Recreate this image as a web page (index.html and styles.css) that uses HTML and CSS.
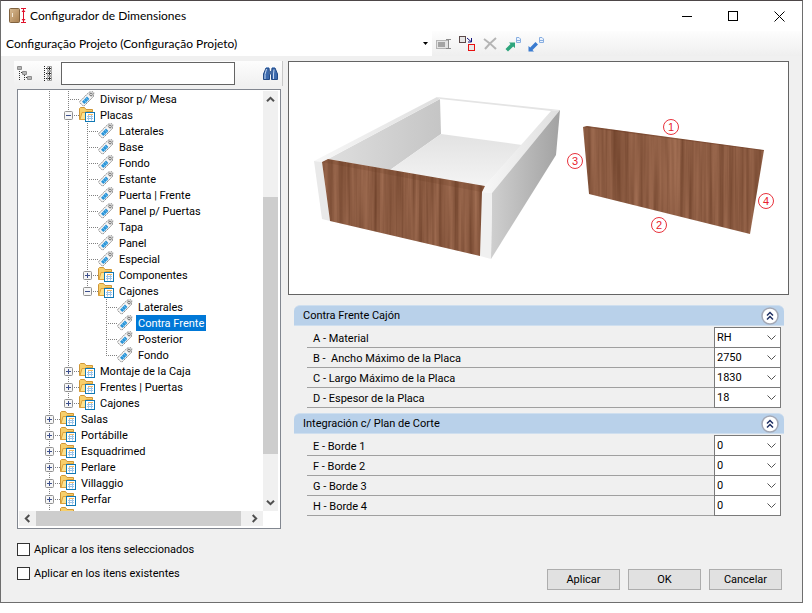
FILE: index.html
```
<!DOCTYPE html>
<html lang="es">
  <head>
    <meta charset="UTF-8" />
    <title>Configurador de Dimensiones</title>
    <link rel="stylesheet" href="styles.css">
  </head>
  <body>
    <!-- shared icons -->
    <svg class="sprite" aria-hidden="true">
      <symbol id="tag" viewBox="0 0 16 16">
        <path d="M.8 10.5 8.5 2.8 10 1.2 14 .8 14.8 1.6 14.4 5.6 12.8 7.2 5.2 14.8 4 14.8 .8 11.6z" fill="#f6f6f6" stroke="#8c8c8c" stroke-dasharray="2 .6" />
        <path d="M9.3 3.2 10.5 1.8 14 1.5 13.8 5.2 12.3 6.6z" fill="#cfcfcf" />
        <path d="M3 10.8 8 5.5 10.4 7.9 5.4 13z" fill="#2b93d6" />
        <path d="M5 9 7.500 11.500M7 7 9 9.500" stroke="#63bdf0" />
        <circle cx="12" cy="3.500" r="1.200" fill="#fff" stroke="#777" />
      </symbol>
      <symbol id="folder" viewBox="0 0 16 16">
        <path d="M.5 12.5V1.5L1.5 .5H5.5L7 2.5H13.5V12.5z" fill="#f7cf6b" stroke="#cf9636" />
        <path d="M1 12.5 3 5.5H6L7.5 4.5H13.5V12.5z" fill="#fde28f" stroke="#dda23c" />
        <rect x="6.5" y="5.5" width="9" height="9" fill="#fff" stroke="#1078b4" />
        <path d="M8 9.5H14M8 11.5H14M9.5 7V13.5M12.5 7V13.5" stroke="#9cc4e8" />
        <path d="M9 7.5H14" stroke="#f4b860" />
      </symbol>
      <symbol id="plus" viewBox="0 0 9 9">
        <rect x=".5" y=".5" width="8" height="8" rx="1" fill="#f6f6f6" stroke="#919191" />
        <path d="M2 4.5H7M4.5 2V7" stroke="#3c4f8c" />
      </symbol>
      <symbol id="minus" viewBox="0 0 9 9">
        <rect x=".5" y=".5" width="8" height="8" rx="1" fill="#f6f6f6" stroke="#919191" />
        <path d="M2 4.5H7" stroke="#3c4f8c" />
      </symbol>
      <symbol id="arrow" viewBox="0 0 9 9">
        <path d="M1 6.3 4.5 2.8 8 6.3" fill="none" stroke="#505050" stroke-width="2" />
      </symbol>
      <symbol id="collapse" viewBox="0 0 18 18">
        <circle cx="9" cy="9" r="8" fill="#fff" stroke="#a3a8b5" stroke-width="1.5" />
        <path d="M6 8.5 9 5.5 12 8.5M6 12.5 9 9.5 12 12.5" fill="none" stroke="#1f2f63" stroke-width="1.5" />
      </symbol>
    </svg>

    <div class="window">
      <header class="titlebar">
        <svg class="app-icon" viewBox="0 0 17 16" aria-hidden="true">
          <defs>
            <linearGradient id="door" x1="0" x2="1" y2="1">
              <stop offset="0" stop-color="#d9bc94" />
              <stop offset="1" stop-color="#a97f4f" />
            </linearGradient>
          </defs>
          <rect x=".5" y=".5" width="10" height="14" rx="1" fill="url(#door)" stroke="#80623f" />
          <path d="M3.5 5V9" stroke="#f5ead8" />
          <path d="M12 .5H17M12 14.5H17M14.5 1V14" stroke="#e0102a" />
          <path d="M12.5 4 14.5 1.5 16.5 4zM12.5 11 14.5 13.5 16.5 11z" fill="#e0102a" />
        </svg>
        <h1>Configurador de Dimensiones</h1>
        <button class="win-btn" aria-label="Minimizar">
          <svg viewBox="0 0 11 11"><path d="M0 5.5H10" stroke="#000" /></svg>
        </button>
        <button class="win-btn" aria-label="Maximizar">
          <svg viewBox="0 0 11 11"><rect x=".5" y=".5" width="9" height="9" fill="none" stroke="#000" /></svg>
        </button>
        <button class="win-btn" aria-label="Cerrar">
          <svg viewBox="0 0 11 11"><path d="M.5 .5 10.5 10.5M10.5 .5 .5 10.5" stroke="#000" /></svg>
        </button>
      </header>

      <div class="toolbar">
        <select class="project" aria-label="Configuración">
          <option>Configuração Projeto (Configuração Projeto)</option>
        </select>
        <button class="tool" aria-label="Renombrar">
          <svg viewBox="0 0 18 18">
            <rect x="1.5" y="5.5" width="12" height="8" fill="#e4e4e4" stroke="#b4b4b4" />
            <rect x="3" y="7" width="7" height="5" fill="#a4a4a4" />
            <path d="M11 4.5H16M11 13.5H16M13.5 5V13" stroke="#8c8c8c" />
          </svg>
        </button>
        <button class="tool" aria-label="Duplicar">
          <svg viewBox="0 0 18 18">
            <rect x="1.5" y="1.5" width="6" height="6" fill="#e6e6e6" stroke="#5c4a4a" />
            <rect x="10.5" y="9.5" width="6" height="6" fill="#e9e9e9" stroke="#e81010" />
            <path d="M9 3 13 6.5M13.5 3V7H10" fill="none" stroke="#14147c" />
          </svg>
        </button>
        <button class="tool" aria-label="Eliminar">
          <svg viewBox="0 0 18 18"><path d="M3 4Q10 9 15 14M15 3Q9 8 4 14" fill="none" stroke="#b4b4b4" stroke-width="2" /></svg>
        </button>
        <button class="tool" aria-label="Exportar">
          <svg viewBox="0 0 18 18">
            <path d="M1.5 14 6.5 9 5 7.5H11V13L9.2 11.5 4 16.5z" fill="#2ea57c" />
            <path d="M12.5 2.5H15L16.5 4V7.5H12.5z" fill="#eaf3ff" stroke="#88aee0" />
            <path d="M13 5.5H16" stroke="#88aee0" />
          </svg>
        </button>
        <button class="tool" aria-label="Importar">
          <svg viewBox="0 0 18 18">
            <path d="M1.5 16.5V11L3.2 12.5 8.5 7 11 9.5 5.5 15 7 16.5z" fill="#3a7bd0" />
            <path d="M12.5 2.5H15L16.5 4V7.5H12.5z" fill="#eaf3ff" stroke="#88aee0" />
            <path d="M13 5.5H16" stroke="#88aee0" />
          </svg>
        </button>
      </div>

      <main class="content">
        <section class="sidebar">
          <div class="search-bar">
            <button class="tool" aria-label="Expandir">
              <svg viewBox="0 0 18 18">
                <path d="M3.5 6V16M8.5 10V16M5 7.5H6M10 12.5H11" stroke="#333" stroke-dasharray="1 1" />
                <path d="M1.5 1.5H5.500V4.500H1.500zM6.500 6.500H10.500V9.500H6.500zM11.500 11.500H15.500V14.500H11.500z" fill="#f4f4f4" stroke="#8d8d8d" />
                <path d="M2 3H5M7 8H10M12 13H15" stroke="#777" />
              </svg>
            </button>
            <button class="tool" aria-label="Contraer">
              <svg viewBox="0 0 18 18">
                <path d="M5.5 1V17M7 3.5H9M7 8.5H9M7 13.5H9" stroke="#222" stroke-dasharray="1 1" />
                <path d="M8.5 1.5H12.5V5.5H8.5zM8.5 6.5H12.5V10.5H8.5zM8.5 11.5H12.5V15.5H8.5z" fill="#f4f4f4" stroke="#a0a0a0" />
                <path d="M9 3.5H12M9 8.5H12M9 13.5H12M10.5 2V5M10.5 7V10M10.5 12V15" stroke="#333" />
              </svg>
            </button>
            <input class="search" type="text" aria-label="Buscar">
            <button class="tool find" aria-label="Buscar en el árbol">
              <svg viewBox="0 0 18 18">
                <path d="M5 3H8L8.5 8V14.5H2.500V9zM11 3H14L16.500 9V14.500H10.500V8z" fill="#3d6aad" stroke="#234a86" />
                <path d="M7.500 6H11.500V9.500H7.500z" fill="#44699f" />
                <path d="M5.500 4 4 9.500V14M13 4.500 12.500 9V14" fill="none" stroke="#c4d8f2" />
                <path d="M5 2.500H8M11 2.500H14" stroke="#7d9fcf" />
              </svg>
            </button>
          </div>

          <div class="tree-box">
            <nav class="tree-view" aria-label="Categorías">
              <ul class="tree">
                <li>
                  <ul>
                    <li><div class="row"><span class="twig"></span><svg class="ico"><use href="#tag" /></svg><span class="label">Divisor p/ Mesa</span></div></li>
                    <li>
                      <div class="row"><span class="twig"><svg><use href="#minus" /></svg></span><svg class="ico"><use href="#folder" /></svg><span class="label">Placas</span></div>
                      <ul>
                        <li><div class="row"><span class="twig"></span><svg class="ico"><use href="#tag" /></svg><span class="label">Laterales</span></div></li>
                        <li><div class="row"><span class="twig"></span><svg class="ico"><use href="#tag" /></svg><span class="label">Base</span></div></li>
                        <li><div class="row"><span class="twig"></span><svg class="ico"><use href="#tag" /></svg><span class="label">Fondo</span></div></li>
                        <li><div class="row"><span class="twig"></span><svg class="ico"><use href="#tag" /></svg><span class="label">Estante</span></div></li>
                        <li><div class="row"><span class="twig"></span><svg class="ico"><use href="#tag" /></svg><span class="label">Puerta | Frente</span></div></li>
                        <li><div class="row"><span class="twig"></span><svg class="ico"><use href="#tag" /></svg><span class="label">Panel p/ Puertas</span></div></li>
                        <li><div class="row"><span class="twig"></span><svg class="ico"><use href="#tag" /></svg><span class="label">Tapa</span></div></li>
                        <li><div class="row"><span class="twig"></span><svg class="ico"><use href="#tag" /></svg><span class="label">Panel</span></div></li>
                        <li><div class="row"><span class="twig"></span><svg class="ico"><use href="#tag" /></svg><span class="label">Especial</span></div></li>
                        <li><div class="row"><span class="twig"><svg><use href="#plus" /></svg></span><svg class="ico"><use href="#folder" /></svg><span class="label">Componentes</span></div></li>
                        <li>
                          <div class="row"><span class="twig"><svg><use href="#minus" /></svg></span><svg class="ico"><use href="#folder" /></svg><span class="label">Cajones</span></div>
                          <ul>
                            <li><div class="row"><span class="twig"></span><svg class="ico"><use href="#tag" /></svg><span class="label">Laterales</span></div></li>
                            <li><div class="row"><span class="twig"></span><svg class="ico"><use href="#tag" /></svg><span class="label selected">Contra Frente</span></div></li>
                            <li><div class="row"><span class="twig"></span><svg class="ico"><use href="#tag" /></svg><span class="label">Posterior</span></div></li>
                            <li><div class="row"><span class="twig"></span><svg class="ico"><use href="#tag" /></svg><span class="label">Fondo</span></div></li>
                          </ul>
                        </li>
                      </ul>
                    </li>
                    <li><div class="row"><span class="twig"><svg><use href="#plus" /></svg></span><svg class="ico"><use href="#folder" /></svg><span class="label">Montaje de la Caja</span></div></li>
                    <li><div class="row"><span class="twig"><svg><use href="#plus" /></svg></span><svg class="ico"><use href="#folder" /></svg><span class="label">Frentes | Puertas</span></div></li>
                    <li><div class="row"><span class="twig"><svg><use href="#plus" /></svg></span><svg class="ico"><use href="#folder" /></svg><span class="label">Cajones</span></div></li>
                  </ul>
                </li>
                <li><div class="row"><span class="twig"><svg><use href="#plus" /></svg></span><svg class="ico"><use href="#folder" /></svg><span class="label">Salas</span></div></li>
                <li><div class="row"><span class="twig"><svg><use href="#plus" /></svg></span><svg class="ico"><use href="#folder" /></svg><span class="label">Portábille</span></div></li>
                <li><div class="row"><span class="twig"><svg><use href="#plus" /></svg></span><svg class="ico"><use href="#folder" /></svg><span class="label">Esquadrimed</span></div></li>
                <li><div class="row"><span class="twig"><svg><use href="#plus" /></svg></span><svg class="ico"><use href="#folder" /></svg><span class="label">Perlare</span></div></li>
                <li><div class="row"><span class="twig"><svg><use href="#plus" /></svg></span><svg class="ico"><use href="#folder" /></svg><span class="label">Villaggio</span></div></li>
                <li><div class="row"><span class="twig"><svg><use href="#plus" /></svg></span><svg class="ico"><use href="#folder" /></svg><span class="label">Perfar</span></div></li>
                <li><div class="row"><span class="twig"></span><svg class="ico"><use href="#folder" /></svg></div></li>
              </ul>
            </nav>
            <div class="scroll vertical">
              <svg class="up"><use href="#arrow" /></svg>
              <span class="track"><span class="thumb"></span></span>
              <svg class="down"><use href="#arrow" /></svg>
            </div>
            <div class="scroll horizontal">
              <svg class="left"><use href="#arrow" /></svg>
              <span class="track"><span class="thumb"></span></span>
              <svg class="right"><use href="#arrow" /></svg>
            </div>
          </div>
        </section>

        <section class="details">
          <div class="preview">
            <svg viewBox="0 0 499 232" role="img" aria-label="Cajón y contra frente">
              <defs>
                <filter id="wood" x="0" y="0" width="1" height="1" color-interpolation-filters="sRGB">
                  <feTurbulence type="fractalNoise" baseFrequency="0.2 0.006" numOctaves="3" seed="4" />
                  <feColorMatrix values="0.25 0 0 0 0.42  0.22 0 0 0 0.245  0.2 0 0 0 0.155  0 0 0 0 1" />
                </filter>
                <clipPath id="front"><path d="M33 100 39 97 196 124 193 130 191 194 41 159z" /></clipPath>
                <clipPath id="board"><path d="M294 65 298 64 475 88 461 172 300 132z" /></clipPath>
                <linearGradient id="outer" x1="0" x2="1">
                  <stop offset="0" stop-color="#cfcfcf" />
                  <stop offset="1" stop-color="#a2a2a2" />
                </linearGradient>
                <linearGradient id="inner" x1="0" x2="1">
                  <stop offset="0" stop-color="#dedede" />
                  <stop offset="1" stop-color="#c5c5c5" />
                </linearGradient>
                <linearGradient id="base" x2="0" y2="1">
                  <stop offset="0" stop-color="#e2e2e2" />
                  <stop offset="1" stop-color="#f4f4f4" />
                </linearGradient>
                <linearGradient id="rail" x1="0" x2="1">
                  <stop offset="0" stop-color="#f7f7f7" />
                  <stop offset="1" stop-color="#dfdfdf" />
                </linearGradient>
              </defs>
              <!-- drawer -->
              <path d="M151 37 39 97 101 108 152 72z" fill="url(#inner)" />
              <path d="M152 72 233 83 196 124 101 108z" fill="url(#base)" />
              <path d="M25 99 148 35 151 37 39 97 33 100z" fill="url(#rail)" />
              <path d="M148 35 271 48 262 49 151 37z" fill="#e4e4e4" />
              <path d="M262 49 271 48 203 131 193 130 196 124z" fill="url(#rail)" />
              <path d="M271 48 267 93 202 197 203 131z" fill="url(#outer)" />
              <path d="M193 130 203 131 202 197 191 194z" fill="#f0f0f0" />
              <path d="M25 99 33 100 41 159 33 157z" fill="#e9e9e9" />
              <g clip-path="url(#front)">
                <rect x="32" y="96" width="166" height="100" filter="url(#wood)" />
                <path d="M33 100 39 97 196 124 193 130z" fill="#6b3a22" opacity=".2" />
              </g>
              <!-- loose front board -->
              <g clip-path="url(#board)">
                <rect x="293" y="63" width="184" height="110" filter="url(#wood)" />
                <path d="M294 65 298 64 475 88 475 89z" fill="#6b3a22" opacity=".4" />
              </g>
              <g class="marks">
                <circle cx="382" cy="65" r="7.5" /><text x="382" y="69">1</text>
                <circle cx="370" cy="163" r="7.5" /><text x="370" y="167">2</text>
                <circle cx="286" cy="99" r="7.5" /><text x="286" y="103">3</text>
                <circle cx="477" cy="139" r="7.5" /><text x="477" y="143">4</text>
              </g>
            </svg>
          </div>

          <section class="group">
            <div class="group-head">
              <h2>Contra Frente Cajón</h2>
              <button aria-label="Contraer grupo"><svg><use href="#collapse" /></svg></button>
            </div>
            <div class="field"><label for="a">A - Material</label><select id="a"><option>RH</option></select></div>
            <div class="field"><label for="b">B -&nbsp; Ancho Máximo de la Placa</label><select id="b"><option>2750</option></select></div>
            <div class="field"><label for="c">C - Largo Máximo de la Placa</label><select id="c"><option>1830</option></select></div>
            <div class="field"><label for="d">D - Espesor de la Placa</label><select id="d"><option>18</option></select></div>
          </section>

          <section class="group">
            <div class="group-head">
              <h2>Integración c/ Plan de Corte</h2>
              <button aria-label="Contraer grupo"><svg><use href="#collapse" /></svg></button>
            </div>
            <div class="field"><label for="e">E - Borde 1</label><select id="e"><option>0</option></select></div>
            <div class="field"><label for="f">F - Borde 2</label><select id="f"><option>0</option></select></div>
            <div class="field"><label for="g">G - Borde 3</label><select id="g"><option>0</option></select></div>
            <div class="field"><label for="h">H - Borde 4</label><select id="h"><option>0</option></select></div>
          </section>
        </section>
      </main>

      <footer class="footer">
        <div class="checks">
          <label><input type="checkbox">Aplicar a los itens seleccionados</label>
          <label><input type="checkbox">Aplicar en los itens existentes</label>
        </div>
        <div class="actions">
          <button>Aplicar</button>
          <button>OK</button>
          <button>Cancelar</button>
        </div>
      </footer>
    </div>
  </body>
</html>
```

FILE: styles.css
```
* {
  box-sizing: border-box;
}

body {
  margin: 0;
  padding: 0 9px 10px 0;
  height: 100vh;
  background: #fff;
  font: 11px/16px Roboto, "Liberation Sans", sans-serif;
  color: #000;
}

button,
input,
select {
  margin: 0;
  padding: 0;
  font: inherit;
  color: inherit;
}

ul {
  margin: 0;
  padding: 0;
  list-style: none;
}

svg {
  display: block;
  flex: none;
}

.sprite {
  position: absolute;
  width: 0;
  height: 0;
}

.window {
  display: flex;
  flex-direction: column;
  height: 100%;
  background: #f0f0f0;
  border: 1px solid #6e6e6e;
  border-top-color: #4d4648;
}

/* title bar */
.titlebar {
  display: flex;
  align-items: center;
  height: 30px;
  padding-left: 8px;
  background: #fff;
}

.titlebar h1 {
  flex: 1;
  margin: 0 0 0 4px;
  font: 12px/16px Lato, sans-serif;
}

.app-icon {
  width: 17px;
  height: 16px;
}

.win-btn {
  display: flex;
  align-items: center;
  justify-content: center;
  width: 46px;
  height: 30px;
  background: none;
  border: 0;
}

.win-btn svg {
  width: 11px;
  height: 11px;
}

/* project selector and tools */
.toolbar {
  display: flex;
  align-items: center;
  height: 25px;
  background: linear-gradient(#fdfdfd, #efefef);
}

.project {
  width: 431px;
  height: 25px;
  margin-right: 3px;
  padding-left: 5px;
  appearance: none;
  border: 0;
  font: 12px/16px Lato, sans-serif;
  background: #fff url("data:image/svg+xml,%3Csvg xmlns='http://www.w3.org/2000/svg' width='5' height='3'%3E%3Cpath d='M0 0h5L2.5 3z'/%3E%3C/svg%3E") no-repeat right 4px center;
}

.tool {
  width: 18px;
  height: 18px;
  margin-right: 5px;
  background: none;
  border: 0;
}

.tool svg {
  width: 18px;
  height: 18px;
}

.content {
  display: flex;
  flex: 1;
  min-height: 0;
  gap: 5px;
  padding: 5px 13px 0;
}

/* sidebar */
.sidebar {
  display: flex;
  flex-direction: column;
  flex: none;
  width: 269px;
}

.search-bar {
  display: flex;
  align-items: center;
  height: 25px;
  margin-bottom: 3px;
  padding-left: 2px;
  background: linear-gradient(#fdfdfd, #f0f0f0);
  border-right: 1px solid #c8c8c8;
}

.search {
  width: 174px;
  height: 23px;
  margin-left: -1px;
  padding: 0 4px;
  background: #fff;
  border: 1px solid #646464;
}

.find {
  margin: 0 3px 0 auto;
}

.tree-box {
  display: grid;
  grid-template-columns: 1fr 15px;
  grid-template-rows: 1fr 15px;
  flex: 1;
  min-height: 0;
  margin: 0 2px 0 3px;
  padding: 1px 2px 2px 1px;
  background: #fff;
  border: 1px solid #828790;
}

.tree-view {
  min-height: 0;
  overflow: hidden;
}

.tree {
  padding-left: 22px;
}

.tree ul {
  padding-left: 19px;
}

/* dotted guide running past every item that has a sibling below */
.tree li:not(:last-child) {
  background: linear-gradient(#808080 1px, transparent 1px) 8px 0 / 1px 2px repeat-y;
}

.row {
  display: flex;
  align-items: center;
  height: 16px;
}

.twig {
  width: 19px;
  height: 16px;
  padding: 4px 0 0 4px;
  background:
    linear-gradient(#fff, #fff) 0 8px / 8px 1px no-repeat,
    linear-gradient(90deg, #808080 1px, transparent 1px) 0 8px / 2px 1px repeat-x;
}

/* the last item only gets the upper half of the guide */
.tree li:last-child > .row > .twig {
  background:
    linear-gradient(#fff, #fff) 0 8px / 8px 1px no-repeat,
    linear-gradient(90deg, #808080 1px, transparent 1px) 0 8px / 2px 1px repeat-x,
    linear-gradient(#808080, #808080) 8px 0 / 1px 1px no-repeat,
    linear-gradient(#808080, #808080) 8px 2px / 1px 1px no-repeat,
    linear-gradient(#808080, #808080) 8px 4px / 1px 1px no-repeat,
    linear-gradient(#808080, #808080) 8px 6px / 1px 1px no-repeat;
}

.twig svg {
  width: 9px;
  height: 9px;
}

.ico {
  width: 16px;
  height: 16px;
  margin-right: 3px;
}

.label {
  padding: 2px 2px 0;
  line-height: 14px;
  white-space: nowrap;
}

.selected {
  background: #0078d7;
  color: #fff;
}

.scroll {
  display: flex;
  align-items: center;
  background: #f0f0f0;
}

.scroll > svg {
  width: 9px;
  height: 9px;
  margin: 4px;
}

.vertical {
  flex-direction: column;
}

.track {
  flex: 1;
}

.thumb {
  display: block;
  background: #cdcdcd;
}

.vertical .track {
  width: 100%;
  padding-top: 89px;
}

.vertical .thumb {
  height: 257px;
}

.horizontal .track {
  height: 100%;
}

.horizontal .thumb {
  width: 205px;
  height: 100%;
}

.down {
  transform: rotate(180deg);
}

.left {
  transform: rotate(-90deg);
}

.right {
  transform: rotate(90deg);
}

/* details */
.details {
  flex: 1;
  min-width: 0;
}

.preview {
  margin-bottom: 10px;
  background: #fff;
  border: 1px solid #646464;
}

.preview svg {
  width: 100%;
}

.marks {
  fill: none;
  stroke: #e8323c;
}

.marks text {
  fill: #e8202c;
  stroke: none;
  font: 11px "Liberation Sans", sans-serif;
  text-anchor: middle;
}

.group {
  margin: 0 5px 5px 6px;
}

.group-head {
  display: flex;
  align-items: center;
  justify-content: space-between;
  height: 21px;
  margin-bottom: 1px;
  padding: 0 5px 0 9px;
  background: #b9d1ea;
  border: 1px solid #cfdfef;
  border-width: 1px 0;
  border-radius: 6px 6px 0 0;
}

.group-head h2 {
  margin: 0;
  font: inherit;
}

.group-head button {
  background: none;
  border: 0;
}

.group-head svg {
  width: 18px;
  height: 18px;
}

.field {
  display: flex;
  margin: 0 3px 0 13px;
}

.field label {
  flex: 1;
  height: 21px;
  padding: 4px 6px 0;
  border-bottom: 1px solid #a0a0a0;
}

.field select {
  width: 67px;
  height: 21px;
  padding: 0 2px;
  appearance: none;
  border: 1px solid #7a7a7a;
  border-radius: 0;
  background: #fff url("data:image/svg+xml,%3Csvg xmlns='http://www.w3.org/2000/svg' width='9' height='6'%3E%3Cpath d='M.5.5l4 4 4-4' fill='none' stroke='%23555'/%3E%3C/svg%3E") no-repeat right 4px center;
}

.field + .field {
  margin-top: -1px;
}

/* footer */
.footer {
  display: flex;
  align-items: flex-end;
  justify-content: space-between;
  padding: 13px 20px 12px 16px;
}

.checks {
  display: flex;
  flex-direction: column;
  gap: 8px;
  margin-bottom: 8px;
}

.checks label {
  display: flex;
  align-items: center;
  gap: 4px;
}

.checks input {
  width: 13px;
  height: 13px;
  margin-bottom: 2px;
  appearance: none;
  background: #fff;
  border: 1px solid #333;
}

.actions {
  display: flex;
  gap: 8px;
}

.actions button {
  width: 73px;
  height: 21px;
  background: #e1e1e1;
  border: 1px solid #adadad;
}
```
